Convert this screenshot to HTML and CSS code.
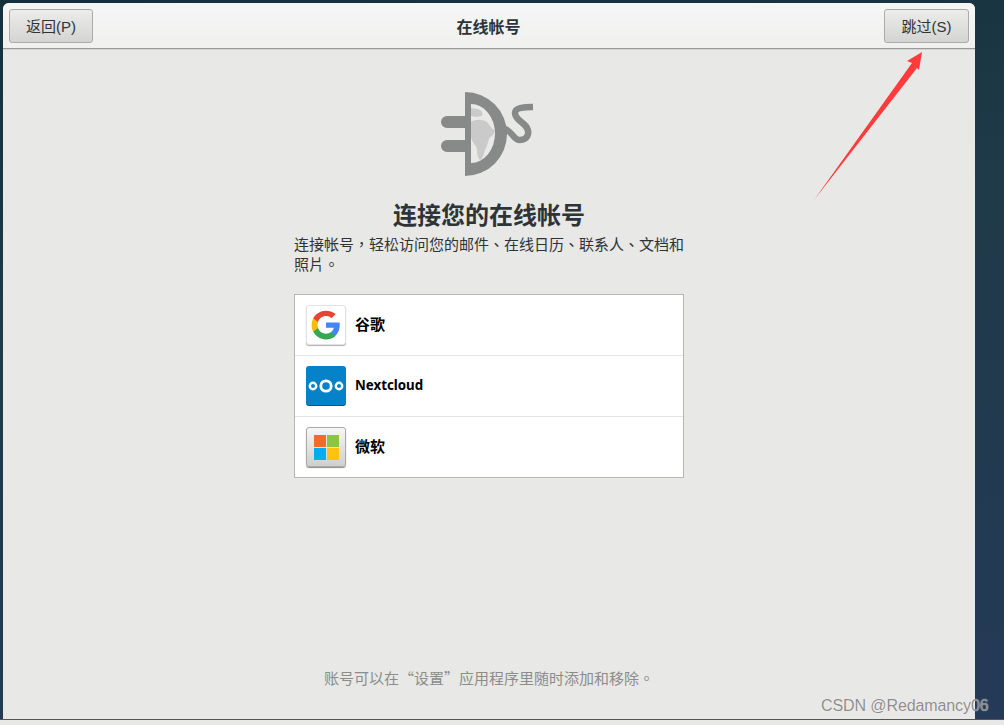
FILE: index.html
```html
<!DOCTYPE html>
<html lang="zh-CN">
<head>
  <meta charset="UTF-8" />
  <title>在线帐号</title>
  <link rel="stylesheet" href="styles.css">
</head>
<body>
  <div class="desktop">
    <div class="window">
      <header class="topbar">
        <button class="btn">返回(P)</button>
        <span class="topbar-title">在线帐号</span>
        <button class="btn btn-right">跳过(S)</button>
      </header>

      <main class="content">
        <svg class="hero" width="130" height="100" viewBox="4 0 130 100">
          <path class="hero-line" d="M27 42H47M27 66H47" />
          <path class="hero-cable" d="M84 49C92 50 93 60 100 60C107 60 110 54 107 48C104 42 95 40 95 33C95 28 103 27 113 27" />
          <path class="hero-body" d="M45 12A42 42 0 0 1 45 96Z" />
          <path class="hero-globe" d="M51 24A24 29.500 0 0 1 51 83Z" />
          <path class="hero-land" d="M51 28L57 29C61 29 64 33 62 36L56 37L51 36ZM51 42C56 39 64 39 68 43C70 46 72 49 75 50C74 54 72 57 70 57C68 60 68 64 66 68C64 72 63 78 61 80C58 80 57 74 57 68C54 64 51 60 51 56Z" />
        </svg>

        <h1 class="title">连接您的在线帐号</h1>
        <p class="desc" lang="zh-Hant">连接帐号，轻松访问您的邮件、在线日历、联系人、文档和照片。</p>

        <ul class="accounts">
          <li class="account">
            <span class="tile tile-google">
              <svg width="30" height="30" viewBox="0 0 48 48">
                <path fill="#4285f4" d="M46 24.500c0-1.600-.1-3-.4-4.500H24v8.500h12.400c-.5 2.900-2.200 5.300-4.600 6.900v5.700h7.400C43.500 36.700 46 31.100 46 24.500z" />
                <path fill="#34a853" d="M24 47c6.200 0 11.400-2 15.200-5.600l-7.400-5.700c-2 1.400-4.700 2.200-7.800 2.200-6 0-11-4-12.800-9.500H3.500v5.900C7.300 41.800 15 47 24 47z" />
                <path fill="#fbbc05" d="M11.200 28.900c-.5-1.400-.7-3-.7-4.900s.3-3.400.7-4.900v-5.900H3.500C2 16.300 1 20 1 24s1 7.700 2.500 10.800z" />
                <path fill="#ea4335" d="M24 9.600c3.400 0 6.400 1.200 8.800 3.400l6.600-6.600C35.400 3 30.200 1 24 1 15 1 7.300 6.200 3.500 13.200l7.700 5.900C13 13.600 18 9.600 24 9.600z" />
              </svg>
            </span>
            <span class="account-name">谷歌</span>
          </li>
          <li class="account">
            <span class="tile tile-nextcloud">
              <svg width="36" height="16" viewBox="0 0 36 16">
                <circle class="ring" cx="18" cy="8" r="5.200" stroke-width="2.800" />
                <circle class="ring" cx="5" cy="8" r="3.200" stroke-width="2.400" />
                <circle class="ring" cx="31" cy="8" r="3.200" stroke-width="2.400" />
              </svg>
            </span>
            <span class="account-name account-name-latin">Nextcloud</span>
          </li>
          <li class="account">
            <span class="tile tile-ms">
              <span class="ms-grid">
                <i class="ms-red"></i><i class="ms-green"></i><i class="ms-blue"></i><i class="ms-yellow"></i>
              </span>
            </span>
            <span class="account-name">微软</span>
          </li>
        </ul>

        <p class="footnote" lang="zh-Hant">账号可以在“设置”应用程序里随时添加和移除。</p>
      </main>
    </div>
  </div>
  <div class="strip"></div>

  <svg class="arrow" width="120" height="160" viewBox="0 0 120 160">
    <polygon points="112,2 109,20 107,18 4,150 102,13 97,11" />
  </svg>
  <div class="watermark">CSDN @Redamancy06</div>
</body>
</html>
```

FILE: styles.css
```css
body, html {
  margin: 0;
  padding: 0;
  height: 100%;
  overflow: hidden;
  background: #e8e8e6;
  font-family: "Liberation Sans", "Noto Sans CJK SC", sans-serif;
  color: #2e3436;
}

.desktop {
  height: 720px;
  box-sizing: border-box;
  padding: 3px 29px 0 3px;
  background: linear-gradient(170deg, #14303c 0%, #1f3a48 40%, #243a58 100%);
  border-bottom: 1px solid #555;
}

.window {
  height: 100%;
  display: flex;
  flex-direction: column;
  background: #e8e8e6;
  border-radius: 6px 6px 0 0;
  overflow: hidden;
}

.topbar {
  height: 46px;
  flex: none;
  display: flex;
  align-items: center;
  justify-content: space-between;
  box-sizing: border-box;
  padding: 0 6px;
  background: linear-gradient(#f6f6f6, #f0f0ef);
  border-bottom: 1px solid #9a9a98;
  box-shadow: 0 1px 0 #d4d4d2;
}

.topbar-title {
  font-size: 16px;
  font-weight: bold;
}

.btn {
  width: 84px;
  height: 34px;
  padding: 0;
  font-family: inherit;
  font-size: 15px;
  color: #2e3436;
  background: linear-gradient(#ececea, #d4d4d2);
  border: 1px solid #ababa9;
  border-radius: 3px;
}

.btn-right {
  width: 85px;
}

.content {
  flex: 1;
  display: flex;
  flex-direction: column;
  align-items: center;
  padding-bottom: 31px;
}

.hero {
  margin-top: 31px;
  flex: none;
}

.hero-line {
  fill: none;
  stroke: #888a8a;
  stroke-width: 12;
  stroke-linecap: round;
}

.hero-cable {
  fill: none;
  stroke: #888a8a;
  stroke-width: 6.500;
}

.hero-body {
  fill: #888a8a;
}

.hero-globe {
  fill: #e9e9e8;
}

.hero-land {
  fill: #c9cac9;
}

.title {
  margin: 18px 0 0;
  font-size: 24px;
  line-height: 36px;
  font-weight: bold;
}

.desc {
  width: 390px;
  margin: 0;
  font-family: "Noto Sans CJK TC", sans-serif;
  font-size: 15px;
  line-height: 20px;
}

.accounts {
  width: 390px;
  box-sizing: border-box;
  margin: 20px 0 0;
  padding: 0;
  list-style: none;
  background: #fff;
  border: 1px solid #b6b6b4;
}

.account {
  height: 61px;
  box-sizing: border-box;
  display: flex;
  align-items: center;
  gap: 9px;
  padding-left: 11px;
  border-bottom: 1px solid #e4e4e4;
}

.account:last-child {
  border-bottom: none;
  height: 60px;
}

.account-name {
  margin-bottom: 2px;
  font-family: "Noto Sans CJK SC", sans-serif;
  font-size: 15px;
  line-height: 18px;
  font-weight: bold;
  color: #000;
}

.account-name-latin {
  font-family: "Noto Sans", sans-serif;
  font-size: 13.300px;
}

.tile {
  width: 40px;
  height: 40px;
  flex: none;
  box-sizing: border-box;
  display: flex;
  align-items: center;
  justify-content: center;
  border-radius: 3px;
}

.tile-google {
  background: #fff;
  border: 1px solid #e2e2e0;
  box-shadow: 0 1px 1px #b0b0ae;
}

.tile-nextcloud {
  background: #0682c9;
  border-bottom: 1px solid #04578a;
}

.ring {
  fill: none;
  stroke: #fff;
}

.tile-ms {
  background: linear-gradient(#f6f6f6, #cfcfcd);
  border: 1px solid #a9a9a7;
  box-shadow: 0 1px 1px #8c8c8a;
}

.ms-grid {
  display: grid;
  grid-template-columns: 12px 12px;
  grid-template-rows: 12px 12px;
  gap: 1px;
}

.ms-red { background: #f36b26; }
.ms-green { background: #8cc63f; }
.ms-blue { background: #00aeef; }
.ms-yellow { background: #ffc20e; }

.footnote {
  margin: auto 0 0;
  font-family: "Noto Sans CJK TC", sans-serif;
  font-size: 15px;
  line-height: 20px;
  color: #8b8d8b;
}

.strip {
  height: 5px;
  background: #e8e8e6;
}

.arrow {
  position: absolute;
  left: 810px;
  top: 50px;
}

.arrow polygon {
  fill: #ff3b3b;
}

.watermark {
  position: absolute;
  left: 821px;
  top: 696px;
  font-size: 16px;
  letter-spacing: -0.1px;
  line-height: 20px;
  color: rgba(120, 120, 120, 0.85);
  text-shadow: 0 0 1px #fff;
  white-space: nowrap;
}
```
